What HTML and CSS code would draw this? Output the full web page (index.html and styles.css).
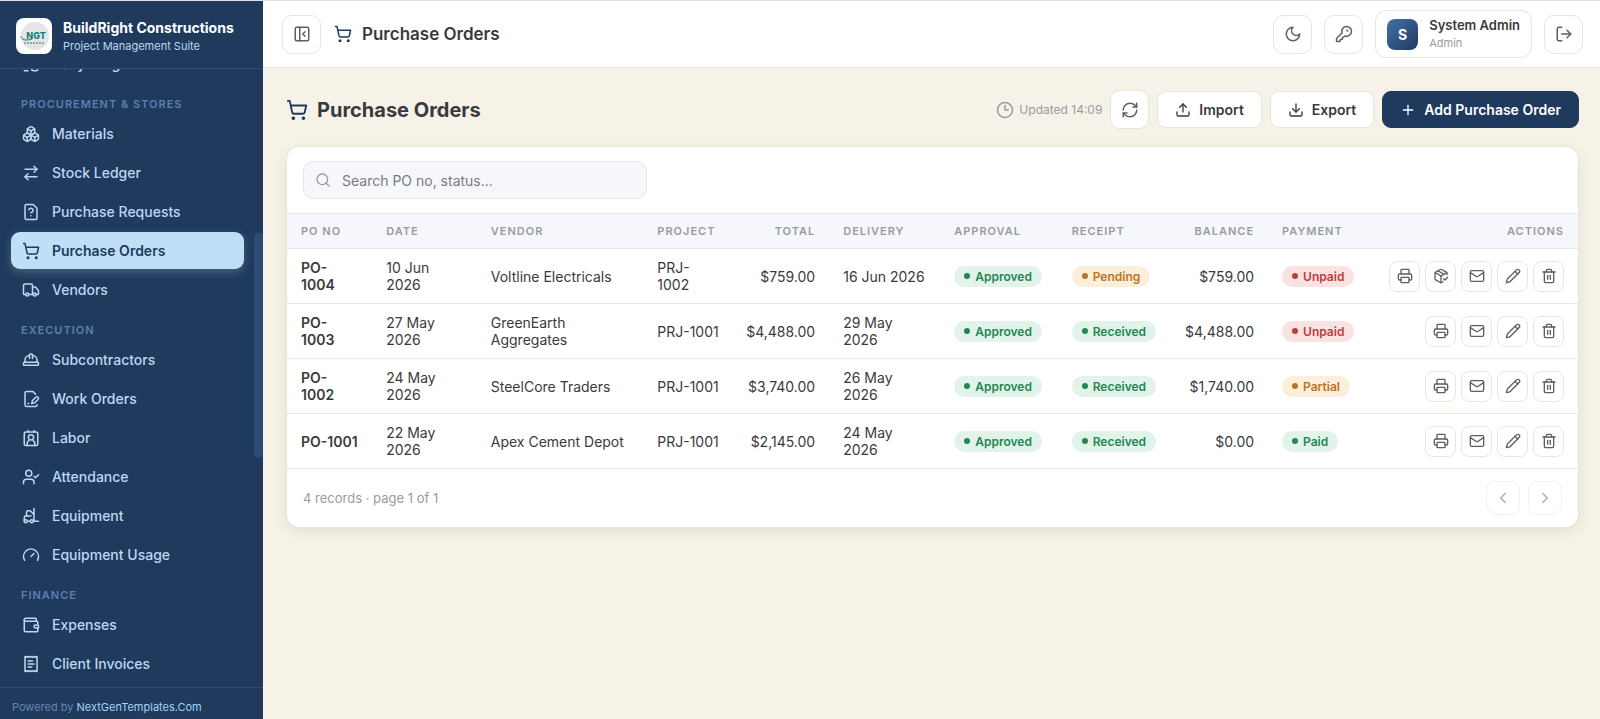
FILE: index.html
```html
<!DOCTYPE html>
<html lang="en">
<head>
  <meta charset="UTF-8" />
  <meta name="viewport" content="width=device-width,initial-scale=1.0" />
  <title>Purchase Orders</title>
  <link rel="stylesheet" href="styles.css">
</head>
<body>
  <svg class="sprite" aria-hidden="true">
    <symbol id="i-log" viewBox="0 0 24 24"><rect x="3" y="3" width="8" height="8" rx="2"/><path d="M7 11v4a2 2 0 0 0 2 2h4"/><rect x="13" y="13" width="8" height="8" rx="2"/><path d="M3 21h5"/></symbol>
    <symbol id="i-boxes" viewBox="0 0 24 24"><path d="M2.97 12.92A2 2 0 0 0 2 14.63v3.24a2 2 0 0 0 .97 1.71l3 1.8a2 2 0 0 0 2.06 0L12 19v-5.5l-5-3-4.03 2.42Z"/><path d="m7 16.5-4.74-2.85"/><path d="m7 16.5 5-3"/><path d="M7 16.5v5.17"/><path d="M12 13.5V19l3.97 2.38a2 2 0 0 0 2.06 0l3-1.8a2 2 0 0 0 .97-1.71v-3.24a2 2 0 0 0-.97-1.71L17 10.5l-5 3Z"/><path d="m17 16.5-5-3"/><path d="m17 16.5 4.74-2.85"/><path d="M17 16.5v5.17"/><path d="M7.97 4.42A2 2 0 0 0 7 6.13v4.37l5 3 5-3V6.13a2 2 0 0 0-.97-1.71l-3-1.8a2 2 0 0 0-2.06 0l-3 1.8Z"/><path d="M12 8 7.26 5.15"/><path d="m12 8 4.74-2.85"/><path d="M12 13.5V8"/></symbol>
    <symbol id="i-swap" viewBox="0 0 24 24"><path d="m16 3 4 4-4 4"/><path d="M20 7H4"/><path d="m8 21-4-4 4-4"/><path d="M4 17h16"/></symbol>
    <symbol id="i-request" viewBox="0 0 24 24"><path d="M12 17h.01"/><path d="M15 2H6a2 2 0 0 0-2 2v16a2 2 0 0 0 2 2h12a2 2 0 0 0 2-2V7z"/><path d="M9.1 9a3 3 0 0 1 5.82 1c0 2-3 3-3 3"/></symbol>
    <symbol id="i-cart" viewBox="0 0 24 24"><circle cx="8" cy="21" r="1"/><circle cx="19" cy="21" r="1"/><path d="M2.05 2.05h2l2.66 12.42a2 2 0 0 0 2 1.58h9.78a2 2 0 0 0 1.95-1.57l1.65-7.43H5.12"/></symbol>
    <symbol id="i-truck" viewBox="0 0 24 24"><path d="M14 18V6a2 2 0 0 0-2-2H4a2 2 0 0 0-2 2v11a1 1 0 0 0 1 1h2"/><path d="M15 18H9"/><path d="M19 18h2a1 1 0 0 0 1-1v-3.65a1 1 0 0 0-.22-.624l-3.48-4.35A1 1 0 0 0 17.52 8H14"/><circle cx="17" cy="18" r="2"/><circle cx="7" cy="18" r="2"/></symbol>
    <symbol id="i-hat" viewBox="0 0 24 24"><path d="M2 18a1 1 0 0 0 1 1h18a1 1 0 0 0 1-1v-2a1 1 0 0 0-1-1H3a1 1 0 0 0-1 1v2z"/><path d="M10 10V5a1 1 0 0 1 1-1h2a1 1 0 0 1 1 1v5"/><path d="M4 15v-3a6 6 0 0 1 6-6"/><path d="M14 6a6 6 0 0 1 6 6v3"/></symbol>
    <symbol id="i-sign" viewBox="0 0 24 24"><path d="M20 19.5v.5a2 2 0 0 1-2 2H6a2 2 0 0 1-2-2V4a2 2 0 0 1 2-2h8.5L18 5.5"/><path d="M8 18h1"/><path d="M18.42 9.61a2.1 2.1 0 1 1 2.97 2.97L16.95 17 13 18l.99-3.95 4.43-4.44Z"/></symbol>
    <symbol id="i-contact" viewBox="0 0 24 24"><path d="M16 2v2"/><path d="M8 2v2"/><rect x="3" y="4" width="18" height="18" rx="2"/><circle cx="12" cy="11" r="3.5"/><path d="M7 22v-2a4 4 0 0 1 2.5-4.5"/><path d="M17 22v-2a4 4 0 0 0-2.5-4.5"/></symbol>
    <symbol id="i-attend" viewBox="0 0 24 24"><path d="m16 11 2 2 4-4"/><path d="M16 21v-2a4 4 0 0 0-4-4H6a4 4 0 0 0-4 4v2"/><circle cx="9" cy="7" r="4"/></symbol>
    <symbol id="i-forklift" viewBox="0 0 24 24"><path d="M12 12H5a2 2 0 0 0-2 2v5"/><circle cx="13" cy="19" r="2"/><circle cx="5" cy="19" r="2"/><path d="M8 19h3m5-17v17h6M6 12V7c0-1.1.9-2 2-2h3l5 5"/></symbol>
    <symbol id="i-gauge" viewBox="0 0 24 24"><path d="m12 14 4-4"/><path d="M3.34 19a10 10 0 1 1 17.32 0"/></symbol>
    <symbol id="i-wallet" viewBox="0 0 24 24"><path d="M19 7V4a1 1 0 0 0-1-1H5a2 2 0 0 0 0 4h15a1 1 0 0 1 1 1v4h-3a2 2 0 0 0 0 4h3a1 1 0 0 0 1-1v-2a1 1 0 0 0-1-1"/><path d="M3 5v14a2 2 0 0 0 2 2h15a1 1 0 0 0 1-1v-4"/></symbol>
    <symbol id="i-receipt" viewBox="0 0 24 24"><path d="M4 2v20l2-1 2 1 2-1 2 1 2-1 2 1 2-1 2 1V2l-2 1-2-1-2 1-2-1-2 1-2-1-2 1Z"/><path d="M14 8H8"/><path d="M16 12H8"/><path d="M13 16H8"/></symbol>
    <symbol id="i-panel" viewBox="0 0 24 24"><rect x="3" y="3" width="18" height="18" rx="2"/><path d="M9 3v18"/><path d="m16 15-3-3 3-3"/></symbol>
    <symbol id="i-moon" viewBox="0 0 24 24"><path d="M12 3a6 6 0 0 0 9 9 9 9 0 1 1-9-9Z"/></symbol>
    <symbol id="i-key" viewBox="0 0 24 24"><path d="M2.586 17.414A2 2 0 0 0 2 18.828V21a1 1 0 0 0 1 1h3a1 1 0 0 0 1-1v-1a1 1 0 0 1 1-1h1a1 1 0 0 0 1-1v-1a1 1 0 0 1 1-1h.172a2 2 0 0 0 1.414-.586l.814-.814a6.5 6.5 0 1 0-4-4z"/><circle cx="16.5" cy="7.5" r=".5"/></symbol>
    <symbol id="i-logout" viewBox="0 0 24 24"><path d="M9 21H5a2 2 0 0 1-2-2V5a2 2 0 0 1 2-2h4"/><path d="m16 17 5-5-5-5"/><path d="M21 12H9"/></symbol>
    <symbol id="i-clock" viewBox="0 0 24 24"><circle cx="12" cy="12" r="10"/><path d="M12 6v6h4.5"/></symbol>
    <symbol id="i-refresh" viewBox="0 0 24 24"><path d="M3 12a9 9 0 0 1 9-9 9.75 9.75 0 0 1 6.74 2.74L21 8"/><path d="M21 3v5h-5"/><path d="M21 12a9 9 0 0 1-9 9 9.75 9.75 0 0 1-6.74-2.74L3 16"/><path d="M8 16H3v5"/></symbol>
    <symbol id="i-upload" viewBox="0 0 24 24"><path d="M21 15v4a2 2 0 0 1-2 2H5a2 2 0 0 1-2-2v-4"/><path d="m17 8-5-5-5 5"/><path d="M12 3v12"/></symbol>
    <symbol id="i-download" viewBox="0 0 24 24"><path d="M21 15v4a2 2 0 0 1-2 2H5a2 2 0 0 1-2-2v-4"/><path d="m7 10 5 5 5-5"/><path d="M12 15V3"/></symbol>
    <symbol id="i-plus" viewBox="0 0 24 24"><path d="M5 12h14"/><path d="M12 5v14"/></symbol>
    <symbol id="i-search" viewBox="0 0 24 24"><circle cx="11" cy="11" r="8"/><path d="m21 21-4.3-4.3"/></symbol>
    <symbol id="i-print" viewBox="0 0 24 24"><path d="M6 18H4a2 2 0 0 1-2-2v-5a2 2 0 0 1 2-2h16a2 2 0 0 1 2 2v5a2 2 0 0 1-2 2h-2"/><path d="M6 9V3a1 1 0 0 1 1-1h10a1 1 0 0 1 1 1v6"/><rect x="6" y="14" width="12" height="8" rx="1"/></symbol>
    <symbol id="i-package" viewBox="0 0 24 24"><path d="m16 16 2 2 4-4"/><path d="M21 10V8a2 2 0 0 0-1-1.73l-7-4a2 2 0 0 0-2 0l-7 4A2 2 0 0 0 3 8v8a2 2 0 0 0 1 1.73l7 4a2 2 0 0 0 2 0l2-1.14"/><path d="m7.5 4.27 9 5.15"/><path d="M3.29 7 12 12l8.71-5"/><path d="M12 22V12"/></symbol>
    <symbol id="i-mail" viewBox="0 0 24 24"><rect x="2" y="4" width="20" height="16" rx="2"/><path d="m22 7-8.97 5.7a1.94 1.94 0 0 1-2.06 0L2 7"/></symbol>
    <symbol id="i-edit" viewBox="0 0 24 24"><path d="M21.174 6.812a1 1 0 0 0-3.986-3.987L3.842 16.174a2 2 0 0 0-.5.83l-1.321 4.352a.5.5 0 0 0 .623.622l4.353-1.32a2 2 0 0 0 .83-.497z"/><path d="m15 5 4 4"/></symbol>
    <symbol id="i-trash" viewBox="0 0 24 24"><path d="M3 6h18"/><path d="M19 6v14a2 2 0 0 1-2 2H7a2 2 0 0 1-2-2V6"/><path d="M8 6V4a2 2 0 0 1 2-2h4a2 2 0 0 1 2 2v2"/><path d="M10 11v6"/><path d="M14 11v6"/></symbol>
    <symbol id="i-prev" viewBox="0 0 24 24"><path d="m15 18-6-6 6-6"/></symbol>
    <symbol id="i-next" viewBox="0 0 24 24"><path d="m9 18 6-6-6-6"/></symbol>
  </svg>

  <div class="app">
    <aside class="sidebar">
      <div class="brand">
        <svg class="brand-logo" viewBox="0 0 36 36" aria-hidden="true">
          <rect width="36" height="36" rx="8" fill="#fff"/>
          <circle cx="19" cy="18" r="14" fill="#e4e5e6"/>
          <text x="20" y="21" text-anchor="middle" font-family="Inter, sans-serif" font-size="9" font-weight="800" fill="#17807b">NGT</text>
          <path d="M5 18c0 4 5 5 11 3" fill="none" stroke="#17807b"/>
          <path d="M8 25h21" stroke="#55606a" stroke-dasharray="2 1"/>
        </svg>
        <div>
          <div class="brand-name">BuildRight Constructions</div>
          <div class="brand-sub">Project Management Suite</div>
        </div>
      </div>

      <nav class="nav">
        <a class="nav-item" href="#"><svg class="icon"><use href="#i-log"/></svg>Daily Progress</a>
        <div class="nav-label">Procurement &amp; Stores</div>
        <a class="nav-item" href="#"><svg class="icon"><use href="#i-boxes"/></svg>Materials</a>
        <a class="nav-item" href="#"><svg class="icon"><use href="#i-swap"/></svg>Stock Ledger</a>
        <a class="nav-item" href="#"><svg class="icon"><use href="#i-request"/></svg>Purchase Requests</a>
        <a class="nav-item active" href="#"><svg class="icon"><use href="#i-cart"/></svg>Purchase Orders</a>
        <a class="nav-item" href="#"><svg class="icon"><use href="#i-truck"/></svg>Vendors</a>
        <div class="nav-label">Execution</div>
        <a class="nav-item" href="#"><svg class="icon"><use href="#i-hat"/></svg>Subcontractors</a>
        <a class="nav-item" href="#"><svg class="icon"><use href="#i-sign"/></svg>Work Orders</a>
        <a class="nav-item" href="#"><svg class="icon"><use href="#i-contact"/></svg>Labor</a>
        <a class="nav-item" href="#"><svg class="icon"><use href="#i-attend"/></svg>Attendance</a>
        <a class="nav-item" href="#"><svg class="icon"><use href="#i-forklift"/></svg>Equipment</a>
        <a class="nav-item" href="#"><svg class="icon"><use href="#i-gauge"/></svg>Equipment Usage</a>
        <div class="nav-label">Finance</div>
        <a class="nav-item" href="#"><svg class="icon"><use href="#i-wallet"/></svg>Expenses</a>
        <a class="nav-item" href="#"><svg class="icon"><use href="#i-receipt"/></svg>Client Invoices</a>
        <span class="nav-thumb"></span>
      </nav>

      <div class="powered">Powered by <a href="#">NextGenTemplates.Com</a></div>
    </aside>

    <div class="main">
      <header class="topbar">
        <button class="icon-btn" aria-label="Collapse sidebar"><svg class="icon"><use href="#i-panel"/></svg></button>
        <div class="topbar-title"><svg class="icon"><use href="#i-cart"/></svg>Purchase Orders</div>
        <div class="topbar-right">
          <button class="icon-btn" aria-label="Dark mode"><svg class="icon"><use href="#i-moon"/></svg></button>
          <button class="icon-btn" aria-label="Change password"><svg class="icon"><use href="#i-key"/></svg></button>
          <div class="user">
            <div class="avatar">S</div>
            <div>
              <div class="user-name">System Admin</div>
              <div class="user-role">Admin</div>
            </div>
          </div>
          <button class="icon-btn" aria-label="Log out"><svg class="icon"><use href="#i-logout"/></svg></button>
        </div>
      </header>

      <main class="content">
        <div class="page-head">
          <h1 class="page-title"><svg class="icon"><use href="#i-cart"/></svg>Purchase Orders</h1>
          <div class="page-actions">
            <span class="updated"><svg class="icon"><use href="#i-clock"/></svg>Updated 14:09</span>
            <button class="icon-btn" aria-label="Refresh"><svg class="icon"><use href="#i-refresh"/></svg></button>
            <button class="btn"><svg class="icon"><use href="#i-upload"/></svg>Import</button>
            <button class="btn"><svg class="icon"><use href="#i-download"/></svg>Export</button>
            <button class="btn btn-primary"><svg class="icon"><use href="#i-plus"/></svg>Add Purchase Order</button>
          </div>
        </div>

        <section class="card">
          <div class="toolbar">
            <label class="search">
              <svg class="icon"><use href="#i-search"/></svg>
              <input type="text" class="search-input" aria-label="Search purchase orders" placeholder="Search PO no, status...">
            </label>
          </div>

          <table class="table">
            <colgroup>
              <col class="col-po"><col class="col-date"><col class="col-vendor"><col class="col-project"><col class="col-total"><col class="col-delivery"><col class="col-status"><col class="col-status"><col class="col-balance"><col class="col-payment"><col>
            </colgroup>
            <thead>
              <tr>
                <th>PO No</th><th>Date</th><th>Vendor</th><th>Project</th><th class="num">Total</th><th>Delivery</th><th>Approval</th><th>Receipt</th><th class="num">Balance</th><th>Payment</th><th class="num">Actions</th>
              </tr>
            </thead>
            <tbody id="rows"></tbody>
          </table>

          <div class="card-foot">
            <span>4 records · page 1 of 1</span>
            <div class="pager">
              <button class="page-btn" disabled aria-label="Previous page"><svg class="icon"><use href="#i-prev"/></svg></button>
              <button class="page-btn" disabled aria-label="Next page"><svg class="icon"><use href="#i-next"/></svg></button>
            </div>
          </div>
        </section>
      </main>
    </div>
  </div>

  <script src="script.js"></script>
</body>
</html>
```
FILE: styles.css
```css
* { margin: 0; padding: 0; box-sizing: border-box; }
body {
  height: 100vh;
  overflow: hidden;
  border-top: 1px solid #dfdfe3;
  background: #f6f2e7;
  color: #3a3a3d;
  font-family: Inter, "Liberation Sans", sans-serif;
  font-size: 14px;
}
button, input { font: inherit; color: inherit; }
button { cursor: pointer; }
a { color: inherit; text-decoration: none; }
.sprite { display: none; }
.icon {
  width: 18px;
  height: 18px;
  flex: none;
  fill: none;
  stroke: currentColor;
  stroke-width: 2;
  stroke-linecap: round;
  stroke-linejoin: round;
}
.app { display: flex; height: 100%; }

/* sidebar */
.sidebar {
  width: 263px;
  flex: none;
  display: flex;
  flex-direction: column;
  background: #1f3a5c;
  color: #bcd7f2;
}
.brand {
  height: 68px;
  flex: none;
  display: flex;
  align-items: center;
  gap: 11px;
  padding: 2px 16px 0;
  border-bottom: 1px solid #2f4b6f;
}
.brand-logo { width: 36px; height: 36px; }
.brand-name {
  font-size: 14px;
  line-height: 20px;
  font-weight: 700;
  color: #fff;
}
.brand-sub { font-size: 11px; line-height: 16px; }
.nav {
  position: relative;
  flex: 1;
  min-height: 0;
  overflow: hidden;
  display: flex;
  flex-direction: column;
  justify-content: flex-end;
  padding: 0 19px 3px 11px;
}
.nav-item {
  display: flex;
  align-items: center;
  flex: none;
  gap: 12px;
  height: 37px;
  margin-bottom: 2px;
  padding: 0 11px;
  border-radius: 9px;
  font-weight: 500;
}
.nav-item.active {
  background: #bfdff7;
  color: #1f3a5c;
  font-weight: 600;
  box-shadow: 0 3px 10px rgba(191, 223, 247, 0.25);
}
.nav-label {
  flex: none;
  padding: 14px 10px 4px;
  font-size: 11px;
  line-height: 13px;
  font-weight: 600;
  letter-spacing: 1px;
  text-transform: uppercase;
  color: #5b7fae;
}
.nav-thumb {
  position: absolute;
  top: 26.5%;
  right: 0;
  width: 9px;
  height: 36.5%;
  border-radius: 5px;
  background: #2b4c77;
}
.powered {
  padding: 12px 12px 5px;
  border-top: 1px solid #2f4b6f;
  font-size: 11px;
  line-height: 14px;
  color: #6585b0;
}
.powered a { color: #a5d3f7; }

/* top bar */
.main { flex: 1; min-width: 0; display: flex; flex-direction: column; }
.topbar {
  height: 67px;
  display: flex;
  align-items: center;
  gap: 13px;
  padding: 0 17px 0 19px;
  background: #fff;
  border-bottom: 1px solid #e9e5d8;
}
.icon-btn {
  width: 39px;
  height: 39px;
  flex: none;
  display: flex;
  align-items: center;
  justify-content: center;
  background: #fff;
  border: 1px solid #e9e5da;
  border-radius: 10px;
  color: #5d5e66;
}
.topbar-title {
  display: flex;
  align-items: center;
  gap: 10px;
  font-size: 17px;
  font-weight: 600;
}
.topbar-title .icon { color: #1f3a5c; }
.topbar-right { display: flex; align-items: center; gap: 12px; margin-left: auto; }
.user {
  display: flex;
  align-items: center;
  gap: 11px;
  height: 48px;
  padding: 0 11px;
  border: 1px solid #e9e5da;
  border-radius: 11px;
}
.avatar {
  width: 31px;
  height: 31px;
  border-radius: 8px;
  background: linear-gradient(135deg, #4372ab, #1f3a5c);
  color: #fff;
  font-weight: 700;
  line-height: 31px;
  text-align: center;
}
.user-name { font-size: 13px; line-height: 18px; font-weight: 600; }
.user-role { font-size: 11px; line-height: 18px; color: #9a9ba0; }

/* page head */
.content { padding: 22px 21px 0 23px; }
.page-head {
  display: flex;
  align-items: center;
  justify-content: space-between;
  margin-bottom: 17px;
}
.page-title {
  display: flex;
  align-items: center;
  gap: 9px;
  font-size: 20px;
  font-weight: 700;
}
.page-title .icon { width: 22px; height: 22px; color: #1f3a5c; }
.page-actions { display: flex; align-items: center; gap: 8px; }
.updated {
  display: flex;
  align-items: center;
  gap: 5px;
  font-size: 12px;
  color: #9a9ba0;
}
.btn {
  display: flex;
  align-items: center;
  gap: 8px;
  height: 37px;
  padding: 0 17px;
  background: #fff;
  border: 1px solid #e9e5da;
  border-radius: 9px;
  font-weight: 600;
}
.btn .icon { width: 16px; height: 16px; }
.btn-primary { background: #1f3a5c; border-color: #1f3a5c; color: #fff; }

/* card + table */
.card {
  background: #fff;
  border: 1px solid #e9e5da;
  border-radius: 13px;
  box-shadow: 0 4px 14px rgba(90, 80, 50, 0.1);
  overflow: hidden;
}
.toolbar { padding: 14px 16px; }
.search {
  display: flex;
  align-items: center;
  gap: 11px;
  width: 344px;
  height: 38px;
  padding: 0 11px;
  background: #f5f7fc;
  border: 1px solid #e6e5e0;
  border-radius: 10px;
  color: #9a9ba0;
}
.search .icon { width: 16px; height: 16px; }
.search-input {
  flex: 1;
  min-width: 0;
  background: none;
  border: none;
  outline: none;
  color: #3a3a3d;
}
.search-input::placeholder { color: #7a7b80; }
.table { width: 100%; table-layout: fixed; border-collapse: collapse; }
.col-po { width: 6.6%; }
.col-date { width: 8.1%; }
.col-vendor { width: 12.9%; }
.col-project { width: 7%; }
.col-total { width: 7.4%; }
.col-delivery { width: 8.6%; }
.col-status { width: 9.1%; }
.col-balance { width: 7.2%; }
.col-payment { width: 8%; }
.table th {
  height: 35px;
  padding: 0 14px;
  background: #f5f7fc;
  border-top: 1px solid #e9e9e6;
  border-bottom: 1px solid #e9e9e6;
  font-size: 11px;
  font-weight: 600;
  letter-spacing: 1px;
  text-align: left;
  text-transform: uppercase;
  white-space: nowrap;
  color: #9a9ba0;
}
.table td {
  height: 55px;
  padding: 10px 14px;
  border-bottom: 1px solid #ece9e0;
  line-height: 17px;
  vertical-align: middle;
}
.table .num { padding-left: 8px; text-align: right; }
.po-no { font-weight: 600; }
.pill {
  display: inline-flex;
  align-items: center;
  gap: 5px;
  height: 21px;
  padding: 0 10px;
  border-radius: 11px;
  font-size: 12px;
  font-weight: 600;
  vertical-align: middle;
}
.pill::before {
  content: "";
  width: 6px;
  height: 6px;
  border-radius: 50%;
  background: currentColor;
}
.pill-green { background: #e2f4ea; color: #228653; }
.pill-amber { background: #fbeedb; color: #bd741f; }
.pill-red { background: #fbe2e2; color: #bd3c3c; }
.table .actions { padding: 0 14px; }
.row-actions { display: flex; justify-content: flex-end; gap: 5px; }
.row-btn {
  width: 31px;
  height: 31px;
  flex: none;
  display: flex;
  align-items: center;
  justify-content: center;
  background: #fff;
  border: 1px solid #e9e5da;
  border-radius: 8px;
  color: #5d5e66;
}
.row-btn .icon { width: 16px; height: 16px; }
.card-foot {
  display: flex;
  align-items: center;
  justify-content: space-between;
  padding: 12px 16px;
  font-size: 13px;
  color: #9a9ba0;
}
.pager { display: flex; gap: 8px; }
.page-btn {
  width: 34px;
  height: 34px;
  display: flex;
  align-items: center;
  justify-content: center;
  background: #fff;
  border: 1px solid #e9e5da;
  border-radius: 9px;
  color: #5d5e66;
  opacity: 0.5;
}
```
FILE: script.js
```js
const orders = [
  { po: 'PO-1004', date: '10 Jun 2026', vendor: 'Voltline Electricals', project: 'PRJ-1002', total: '$759.00', delivery: '16 Jun 2026', receipt: 'Pending', balance: '$759.00', payment: 'Unpaid' },
  { po: 'PO-1003', date: '27 May 2026', vendor: 'GreenEarth Aggregates', project: 'PRJ-1001', total: '$4,488.00', delivery: '29 May 2026', receipt: 'Received', balance: '$4,488.00', payment: 'Unpaid' },
  { po: 'PO-1002', date: '24 May 2026', vendor: 'SteelCore Traders', project: 'PRJ-1001', total: '$3,740.00', delivery: '26 May 2026', receipt: 'Received', balance: '$1,740.00', payment: 'Partial' },
  { po: 'PO-1001', date: '22 May 2026', vendor: 'Apex Cement Depot', project: 'PRJ-1001', total: '$2,145.00', delivery: '24 May 2026', receipt: 'Received', balance: '$0.00', payment: 'Paid' },
];

const colors = { Approved: 'green', Received: 'green', Paid: 'green', Pending: 'amber', Partial: 'amber', Unpaid: 'red' };

const pill = text => `<span class="pill pill-${colors[text]}">${text}</span>`;

const rowBtn = (icon, label) =>
  `<button class="row-btn" aria-label="${label}"><svg class="icon"><use href="#i-${icon}"/></svg></button>`;

document.getElementById('rows').innerHTML = orders.map(o => `
  <tr>
    <td class="po-no">${o.po}</td>
    <td>${o.date}</td>
    <td>${o.vendor}</td>
    <td>${o.project}</td>
    <td class="num">${o.total}</td>
    <td>${o.delivery}</td>
    <td>${pill('Approved')}</td>
    <td>${pill(o.receipt)}</td>
    <td class="num">${o.balance}</td>
    <td>${pill(o.payment)}</td>
    <td class="actions"><div class="row-actions">
      ${rowBtn('print', 'Print')}
      ${o.receipt === 'Pending' ? rowBtn('package', 'Receive') : ''}
      ${rowBtn('mail', 'Email')}
      ${rowBtn('edit', 'Edit')}
      ${rowBtn('trash', 'Delete')}
    </div></td>
  </tr>`).join('');
```
